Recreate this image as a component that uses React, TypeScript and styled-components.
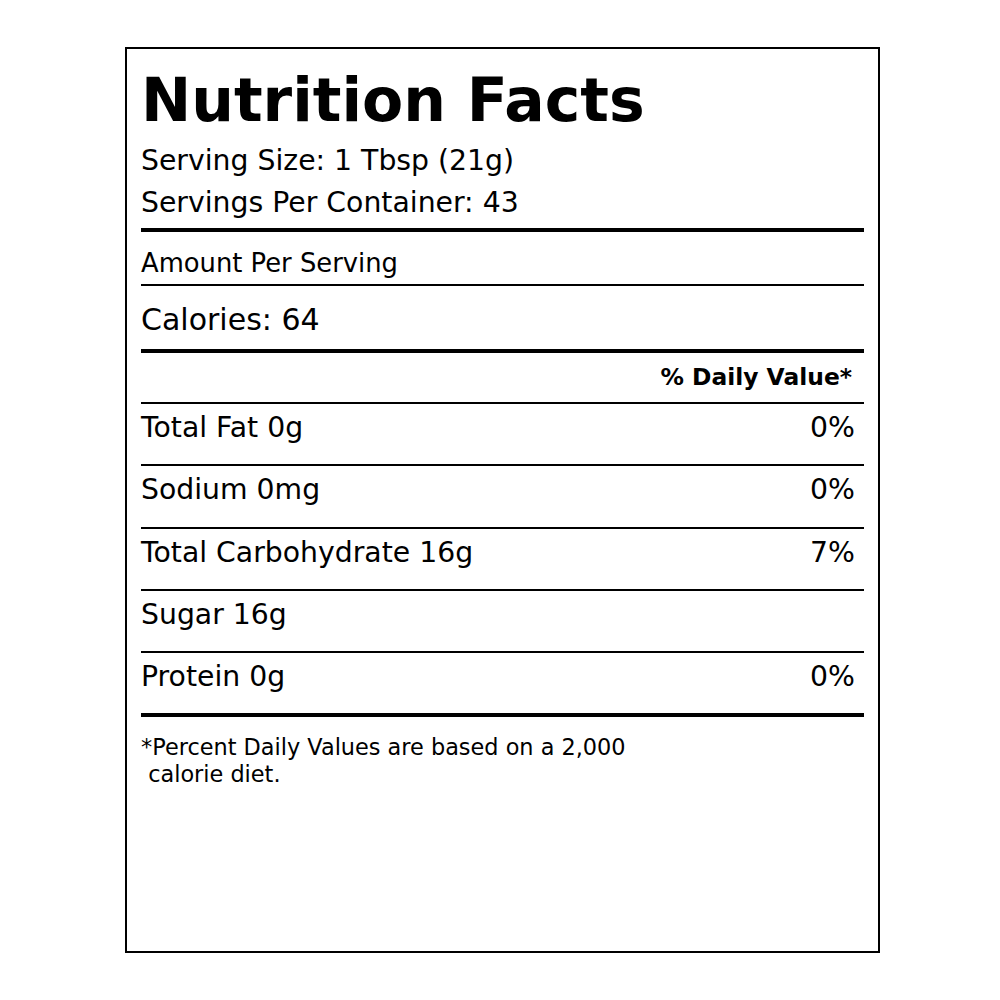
import React from "react";
import styled, { createGlobalStyle } from "styled-components";

const Global = createGlobalStyle`
  html, body { margin: 0; padding: 0; background: #ffffff; }
  body { font-family: "DejaVu Sans", "Liberation Sans", sans-serif; color: #000; }
`;

const Page = styled.div`
  width: 1000px;
  height: 1000px;
  padding: 47px 0 0 125px;
  box-sizing: border-box;
`;

const Label = styled.section`
  width: 755px;
  height: 906px;
  box-sizing: border-box;
  border: 2px solid #000;
  padding: 16px 14px 0 14px;
  display: flex;
  flex-direction: column;
`;

const Title = styled.h1`
  margin: 0 0 9px 0;
  font-size: 60px;
  font-weight: bold;
  line-height: 70px;
`;

const Info = styled.div<{ $last?: boolean }>`
  font-size: 28.3px;
  line-height: 33px;
  margin-bottom: ${(p) => (p.$last ? "9px" : "9px")};
`;

const Rule = styled.div<{ $thick?: boolean }>`
  height: ${(p) => (p.$thick ? "4px" : "2px")};
  background: #000;
`;

const Amount = styled.div`
  font-size: 25.8px;
  line-height: 30px;
  padding: 16px 0 6px;
`;

const Calories = styled.div`
  font-size: 30px;
  line-height: 35px;
  padding: 16px 0 12px;
`;

const DailyHeader = styled.div`
  font-size: 23.4px;
  font-weight: bold;
  line-height: 27px;
  text-align: right;
  padding: 11px 12px 11px 0;
`;

const Row = styled.div<{ $last?: boolean }>`
  display: flex;
  justify-content: space-between;
  font-size: 28.3px;
  line-height: 33px;
  padding: 7px 9px 20.25px 0;
  border-bottom: ${(p) => (p.$last ? "none" : "2px solid #000")};
`;

const Footnote = styled.p`
  margin: 0;
  padding-top: 17px;
  font-size: 22.4px;
  line-height: 27px;
  white-space: pre-wrap;
`;

const rows: { name: string; dv?: string }[] = [
  { name: "Total Fat 0g", dv: "0%" },
  { name: "Sodium 0mg", dv: "0%" },
  { name: "Total Carbohydrate 16g", dv: "7%" },
  { name: "Sugar 16g" },
  { name: "Protein 0g", dv: "0%" },
];

export default function App() {
  return (
    <>
      <Global />
      <Page>
        <Label>
          <Title>Nutrition Facts</Title>
          <Info>Serving Size: 1 Tbsp (21g)</Info>
          <Info $last>Servings Per Container: 43</Info>
          <Rule $thick />
          <Amount>Amount Per Serving</Amount>
          <Rule />
          <Calories>Calories: 64</Calories>
          <Rule $thick />
          <DailyHeader>% Daily Value*</DailyHeader>
          <Rule />
          {rows.map((r, i) => (
            <Row key={r.name} $last={i === rows.length - 1}>
              <span>{r.name}</span>
              <span>{r.dv ?? ""}</span>
            </Row>
          ))}
          <Rule $thick />
          <Footnote>{"*Percent Daily Values are based on a 2,000\n calorie diet."}</Footnote>
        </Label>
      </Page>
    </>
  );
}
